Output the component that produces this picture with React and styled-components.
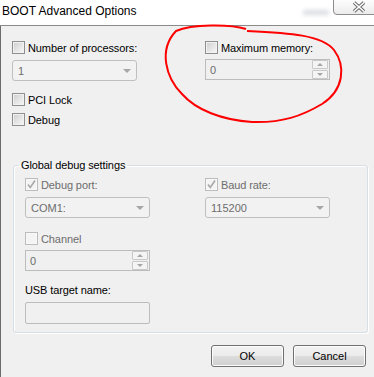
import styled, { createGlobalStyle } from 'styled-components'

const GlobalStyle = createGlobalStyle`
	html, body {
		margin: 0;
		padding: 0;
	}
	body {
		width: 374px;
		height: 377px;
		overflow: hidden;
		background: #f0f0f0;
		font-family: "Liberation Sans", Arial, sans-serif;
	}
`

const Checkbox = ({ checked, disabled }) => (
	<Box $disabled={disabled}>
		{checked && (
			<svg width='11' height='11' viewBox='0 0 11 11'>
				<path d='M2 5.5 L4.3 8.5 L9 1.5' stroke='#a8a8a8' strokeWidth='1.6' fill='none' />
			</svg>
		)}
	</Box>
)

const Check = ({ label, checked, disabled, top }) => (
	<CheckRow $disabled={disabled} $top={top}>
		<Checkbox checked={checked} disabled={disabled} />
		<span>{label}</span>
	</CheckRow>
)

const Combo = ({ value, top }) => (
	<ComboBox $top={top}>
		<span>{value}</span>
		<Arrow />
	</ComboBox>
)

const Spin = ({ value, top }) => (
	<SpinBox $top={top}>
		<span>{value}</span>
		<SpinButtons>
			<SpinBtn>
				<Tri $up />
			</SpinBtn>
			<SpinBtn>
				<Tri />
			</SpinBtn>
		</SpinButtons>
	</SpinBox>
)

const App = () => {
	return (
		<Window>
			<GlobalStyle />
			<TitleBar>
				<Title>BOOT Advanced Options</Title>
				<Spacer />
				<Blur />
				<CloseButton>
					<svg width='16' height='12' viewBox='0 0 16 12'>
						<path d='M3 1.5 L13 10.5 M13 1.5 L3 10.5' stroke='#6a6a6a' strokeWidth='3.6' fill='none' />
						<path d='M3 1.5 L13 10.5 M13 1.5 L3 10.5' stroke='#fff' strokeWidth='1.6' fill='none' />
					</svg>
				</CloseButton>
			</TitleBar>
			<Body>
				<TopGrid>
					<Column>
						<Check label='Number of processors:' />
						<Combo value='1' top={6} />
						<Check label='PCI Lock' top={12} />
						<Check label='Debug' top={7} />
					</Column>
					<Column>
						<Check label='Maximum memory:' />
						<Spin value='0' top={5} />
					</Column>
				</TopGrid>
				<Group>
					<Legend>Global debug settings</Legend>
					<GroupGrid>
						<Column>
							<Check label='Debug port:' checked disabled />
							<Combo value='COM1:' top={6} />
							<Check label='Channel' disabled top={14} />
							<Spin value='0' top={5} />
							<FieldLabel>USB target name:</FieldLabel>
							<TextBox />
						</Column>
						<Column>
							<Check label='Baud rate:' checked disabled />
							<Combo value='115200' top={6} />
						</Column>
					</GroupGrid>
				</Group>
				<ButtonRow>
					<Button>OK</Button>
					<Button>Cancel</Button>
				</ButtonRow>
			</Body>
			<Scribble width='374' height='377' viewBox='0 0 374 377'>
				<path
					d='M247 31 C 290 33, 322 35, 334 50 C 346 66, 344 90, 322 104 C 302 116, 282 123, 252 122 C 222 120, 196 110, 182 94 C 166 78, 158 50, 176 31 C 192 24, 230 24, 246 29'
					stroke='#f00'
					strokeWidth='2'
					fill='none'
				/>
			</Scribble>
		</Window>
	)
}
export default App

const Window = styled.div`
	position: relative;
	width: 374px;
	height: 377px;
	display: flex;
	flex-direction: column;
	font-size: 11px;
`

const TitleBar = styled.div`
	height: 25px;
	flex-shrink: 0;
	background: #fff;
	border-bottom: 1px solid #8a8a8a;
	display: flex;
	align-items: flex-start;
	overflow: hidden;
`

const Title = styled.div`
	font-size: 12px;
	line-height: 15px;
	padding: 4px 0 0 2px;
	color: #000;
`

const Spacer = styled.div`
	flex: 1;
`

const Blur = styled.div`
	width: 26px;
	height: 5px;
	margin: 10px 4px 0 0;
	background: #c9ced8;
	filter: blur(2px);
	opacity: 0.7;
`

const CloseButton = styled.div`
	width: 43px;
	height: 16px;
	margin: -1px -2px 0 0;
	box-sizing: border-box;
	border: 1px solid #8c8c8c;
	border-radius: 0 0 0 4px;
	background: linear-gradient(#fdfdfd, #ececec);
	display: flex;
	align-items: flex-start;
	padding: 1px 0 0 17px;
`

const Body = styled.div`
	flex: 1;
	background: #f0f0f0;
	border-left: 1px solid #6b6b6b;
	padding: 15px 0 0 11px;
	display: flex;
	flex-direction: column;
`

const TopGrid = styled.div`
	display: grid;
	grid-template-columns: 193px 1fr;
`

const Column = styled.div`
	display: flex;
	flex-direction: column;
	align-items: flex-start;
`

const CheckRow = styled.div`
	display: flex;
	align-items: center;
	gap: 3px;
	height: 13px;
	margin-top: ${(p) => p.$top || 0}px;
	color: ${(p) => (p.$disabled ? '#6d6d6d' : '#000')};
	letter-spacing: -0.1px;
	white-space: nowrap;
`

const Box = styled.span`
	width: 13px;
	height: 13px;
	box-sizing: border-box;
	display: flex;
	align-items: center;
	justify-content: center;
	border: 1px solid ${(p) => (p.$disabled ? '#bcbcbc' : '#8e8f8f')};
	background: ${(p) =>
		p.$disabled ? '#f4f4f4' : 'linear-gradient(135deg, #cdcdcd 0%, #e8e8e8 60%, #f7f7f7 100%)'};
	box-shadow: inset 0 0 0 1px ${(p) => (p.$disabled ? '#f8f8f8' : '#f2f2f2')};
`

const ComboBox = styled.div`
	width: 125px;
	height: 21px;
	margin-top: ${(p) => p.$top || 0}px;
	box-sizing: border-box;
	border: 1px solid #bfbfbf;
	border-radius: 3px;
	background: #f2f2f2;
	display: flex;
	align-items: center;
	justify-content: space-between;
	padding: 0 5px 0 5px;
	color: #6d6d6d;
`

const Arrow = styled.span`
	width: 0;
	height: 0;
	border-left: 4px solid transparent;
	border-right: 4px solid transparent;
	border-top: 4px solid #a6a6a6;
`

const SpinBox = styled.div`
	width: 125px;
	height: 21px;
	margin-top: ${(p) => p.$top || 0}px;
	box-sizing: border-box;
	border: 1px solid #bcbcbc;
	background: #f0f0f0;
	display: flex;
	align-items: center;
	justify-content: space-between;
	padding: 0 1px 0 4px;
	color: #6d6d6d;
`

const SpinButtons = styled.div`
	display: flex;
	flex-direction: column;
	gap: 1px;
`

const SpinBtn = styled.div`
	width: 16px;
	height: 9px;
	box-sizing: border-box;
	border: 1px solid #c8c8c8;
	border-radius: 1px;
	background: #f4f4f4;
	display: flex;
	align-items: center;
	justify-content: center;
`

const Tri = styled.span`
	width: 0;
	height: 0;
	border-left: 3px solid transparent;
	border-right: 3px solid transparent;
	${(p) => (p.$up ? 'border-bottom: 3px solid #a6a6a6;' : 'border-top: 3px solid #a6a6a6;')}
`

const Group = styled.fieldset`
	margin: 33px 0 0 1px;
	width: 355px;
	min-width: 0;
	box-sizing: border-box;
	border: 1px solid #d5dfe5;
	border-radius: 3px;
	box-shadow: inset 1px 1px 0 #fff, 1px 1px 0 #fff;
	padding: 6px 0 8px 11px;
`

const Legend = styled.legend`
	padding: 0 2px;
	margin-left: -6px;
	line-height: 13px;
	color: #000;
	letter-spacing: -0.1px;
`

const GroupGrid = styled.div`
	display: grid;
	grid-template-columns: 180px 1fr;
`

const FieldLabel = styled.div`
	margin-top: 13px;
	line-height: 13px;
	color: #000;
	letter-spacing: -0.1px;
`

const TextBox = styled.div`
	width: 125px;
	height: 22px;
	margin-top: 5px;
	box-sizing: border-box;
	border: 1px solid #bcbcbc;
	border-radius: 2px;
	background: #f0f0f0;
`

const ButtonRow = styled.div`
	display: flex;
	justify-content: flex-end;
	gap: 9px;
	padding-right: 8px;
	margin-top: 12px;
`

const Button = styled.div`
	width: 73px;
	height: 22px;
	box-sizing: border-box;
	border: 1px solid #707070;
	border-radius: 3px;
	background: linear-gradient(#f2f2f2 0%, #ebebeb 50%, #dddddd 51%, #cfcfcf 100%);
	box-shadow: inset 0 0 0 1px #fcfcfc;
	display: flex;
	align-items: center;
	justify-content: center;
	color: #000;
`

const Scribble = styled.svg`
	position: absolute;
	top: 0;
	left: 0;
	pointer-events: none;
`
